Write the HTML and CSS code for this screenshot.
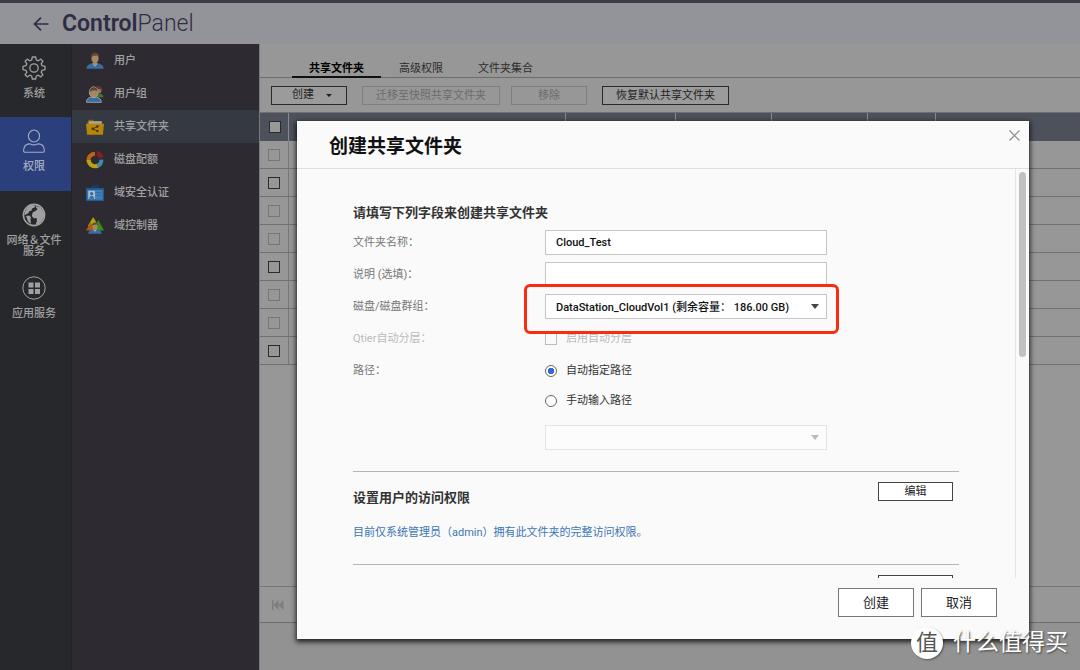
FILE: index.html
```html
<!DOCTYPE html>
<html lang="zh-CN">
<head>
<meta charset="utf-8">
<title>ControlPanel</title>
<link rel="stylesheet" href="styles.css">
</head>
<body>
<div class="app">
  <header class="topbar">
    <button class="back" type="button" aria-label="返回">
      <svg width="16" height="14" viewBox="0 0 16 14" fill="none" stroke="currentColor" stroke-width="1.7"><path d="M15.5 7H1.5M8 .7 1.5 7 8 13.3"/></svg>
    </button>
    <h1 class="brand"><b>Control</b>Panel</h1>
  </header>
  <div class="workspace">
    <nav class="rail" aria-label="分类">
      <a class="rail-item" href="#system">
        <svg width="24" height="24" viewBox="0 0 24 24" fill="none" stroke="currentColor" stroke-width="1.3" stroke-linejoin="round"><path d="M10.3 1h3.4l.6 3 1.9.8 2.6-1.7 2.1 2.1-1.7 2.6.8 1.9 3 .6v3.4l-3 .6-.8 1.9 1.7 2.6-2.1 2.1-2.6-1.7-1.9.8-.6 3h-3.4l-.6-3-1.9-.8-2.6 1.7-2.1-2.1 1.7-2.6-.8-1.9-3-.6v-3.4l3-.6.8-1.9-1.7-2.6 2.1-2.1 2.6 1.7 1.9-.8z"/><circle cx="12" cy="12" r="4.2"/></svg>
        <span>系统</span>
      </a>
      <a class="rail-item is-active" href="#privilege" aria-current="page">
        <svg width="24" height="24" viewBox="0 0 24 24" fill="none" stroke="currentColor" stroke-width="1.1" stroke-linejoin="round"><ellipse cx="12" cy="7" rx="5.6" ry="6"/><path d="M3.5 23.3c-1.4 0-2-.7-1.9-2 .2-3.6 2.300-6 5.400-6.400 1.500-.2 2.500 1 5 1s3.500-1.200 5-1c3.100.4 5.200 2.800 5.400 6.400.1 1.300-.5 2-1.900 2z"/></svg>
        <span>权限</span>
      </a>
      <a class="rail-item" href="#network">
        <svg width="24" height="24" viewBox="0 0 24 24"><circle cx="12" cy="12" r="10.600" fill="none" stroke="currentColor" stroke-width="1.600"/><path fill="currentColor" d="M3 8.500 5.500 4l4-2 4 .5-1 2-2.500 1-.5 2-2.500 1-.5 1.500L4 11.500l-1.500 1zM4 13l3-.5 2 1.500-.5 2.500L9 21l-3-2.500zM14 3l4.500 1.600L21 8l1.500 4-2 5-3.500 4-3.500.5 1.500-3.500-.5-3-2.700.2-2-2.200.8-3.500 3.200-1.700 1.700-1.600-1.500-1.700z"/></svg>
        <span>网络＆文件<br>服务</span>
      </a>
      <a class="rail-item" href="#applications">
        <svg width="24" height="24" viewBox="0 0 24 24"><circle cx="12" cy="12" r="11.200" fill="none" stroke="currentColor"/><path fill="currentColor" d="M6.500 6.500h5v5h-5zM13 6.500h5v5h-5zM6.500 13h5v5h-5zM13 13h5v5h-5z"/></svg>
        <span>应用服务</span>
      </a>
    </nav>
    <nav class="submenu" aria-label="权限">
      <a class="sub-item" href="#users">
        <svg width="18" height="18" viewBox="0 0 20 20"><path fill="#3a6c9f" d="M.5 18.500c.3-4 2.500-5 7-6h5c4.500 1 6.700 2 7 6z"/><path fill="#a4b5c6" d="m7 12.500 3 4 3-4z"/><path fill="#a68761" d="M8 9h4v4l-2 2-2-2z"/><ellipse cx="10" cy="7" rx="4" ry="5" fill="#a68761"/><path fill="#5c4636" d="M5.700 7C5.200 2.500 7.200.5 10 .5s4.800 2 4.300 6.500c-.7-2-1.300-3-2-3.300-1.700.8-3.500.6-4.500.5-.8.800-1.300 1.600-2.100 2.800z"/></svg>
        <span>用户</span>
      </a>
      <a class="sub-item" href="#groups">
        <svg width="18" height="18" viewBox="0 0 20 20"><ellipse cx="14" cy="5.500" rx="3.300" ry="4" fill="#9a7351"/><path fill="#5b3a30" d="M10.500 5c0-3 1.500-4 3.500-4s3.600 1.500 3.300 4.500C16 4.500 14.500 4 10.500 5z"/><path fill="#4b7723" d="M11 13c.5-3 2-3.300 4-3.300 2.500.3 4.200 1.500 4.500 4.300z"/><path fill="#3a6c9f" stroke="#aaa" stroke-width=".9" d="M.5 19.300c.2-4 2-5 5.300-6h5.700c3.300 1 5.300 2 5.500 6z"/><ellipse cx="8.500" cy="8" rx="4.800" ry="6" fill="#a68761" stroke="#aaa" stroke-width=".9"/><path fill="#5c4636" d="M4.200 8c-.2-3.500 1.500-5.500 4.300-5.500s4.500 2 4.300 5.500c-.7-1.500-1-2-1.800-2.300-1.500.5-3.200.5-4.500.3z"/></svg>
        <span>用户组</span>
      </a>
      <a class="sub-item is-active" href="#shared" aria-current="page">
        <svg width="18" height="18" viewBox="0 0 20 20"><path fill="#8c5e00" d="M1.500 5 3 2h5l1 2h9v5h-16z"/><path fill="#aaa394" d="M3 3.500h14.500V8H3z"/><path fill="#b48708" d="M0 6.500h20l-1.200 12H1.200z"/><path fill="none" stroke="#46310a" stroke-width="1" d="m12.500 9.500-5 2.500 5 2.500"/><g fill="#46310a"><circle cx="12.700" cy="9.500" r="1.400"/><circle cx="7.500" cy="12" r="1.400"/><circle cx="12.700" cy="14.500" r="1.400"/></g></svg>
        <span>共享文件夹</span>
      </a>
      <a class="sub-item" href="#quota">
        <svg width="18" height="18" viewBox="0 0 20 20" fill="none" stroke-width="4.500"><path stroke="#bd6610" d="M3 11.500A7 7 0 0 1 10 3"/><path stroke="#b9a313" d="M3 10a7 7 0 0 0 10 6.300"/><path stroke="#3d8cb0" d="M12.500 16.500A7 7 0 0 0 17 9.500"/><path fill="#8c1f20" d="M12 0c4 .5 6.500 3 7.500 6.500L14.700 8c-.4-1.300-1.300-2-2.700-2.300z"/></svg>
        <span>磁盘配额</span>
      </a>
      <a class="sub-item" href="#security">
        <svg width="18" height="18" viewBox="0 0 20 20"><path fill="#173a66" d="m6 0 3 2 1-2 1 2 3-2v6H6z"/><path fill="#24588f" d="M0 4.500h20V19H0z"/><path fill="#3f7fbb" d="M1.500 6.500h17v11h-17z"/><path fill="#a9bfca" d="M2.500 7.500h7.500v9H2.500z"/><circle cx="6.300" cy="10.700" r="1.900" fill="#3a6c9f"/><path fill="#3a6c9f" d="M3.500 16.500c.3-2.500 1.300-3.500 2.800-3.500s2.500 1 2.800 3.500z"/><path stroke="#2d679e" d="M11.500 9.500h5.500M11.500 12.500h5.500"/></svg>
        <span>域安全认证</span>
      </a>
      <a class="sub-item" href="#controller">
        <svg width="18" height="18" viewBox="0 0 20 20"><path fill="#b5a010" d="m8 0 6 10H2z"/><path fill="#ad5c0e" d="m5 6 5.500 9H0z"/><path fill="#3d8d12" d="m13.500 3 6.500 12H10z"/><path fill="#3a6c9f" d="M2.500 18.500c.3-3 2-4 5.500-4.700h4c3.500.7 5.200 1.700 5.500 4.700z"/><path fill="#a6aeb8" d="m8 13.500 2 3.200 2-3.200z"/><ellipse cx="10" cy="10.500" rx="3" ry="3.700" fill="#a68761"/><path fill="#5c4636" d="M6.700 10C6.500 7.300 8 6 10 6s3.500 1.300 3.300 4c-.8-1.300-1.500-1.700-3.300-1.500-1.500.1-2.600.3-3.300 1.500z"/></svg>
        <span>域控制器</span>
      </a>
    </nav>
    <main class="main">
      <nav class="tabs" aria-label="共享文件夹">
        <a class="tab is-active" href="#tab-shared">共享文件夹</a>
        <a class="tab" href="#tab-advanced">高级权限</a>
        <a class="tab" href="#tab-aggregation">文件夹集合</a>
      </nav>
      <div class="toolbar">
        <button class="tool has-menu" type="button">创建<i class="caret"></i></button>
        <button class="tool tool-migrate" type="button" disabled>迁移至快照共享文件夹</button>
        <button class="tool tool-remove" type="button" disabled>移除</button>
        <button class="tool tool-restore" type="button">恢复默认共享文件夹</button>
      </div>
      <div class="table-area">
        <table class="folders">
          <colgroup><col class="col-check"><col class="col-name"><col class="col-size"><col class="col-mid"><col class="col-mid"><col class="col-small"><col></colgroup>
          <thead><tr><th><input class="box" type="checkbox" aria-label="全选"></th><th></th><th></th><th></th><th></th><th></th><th></th></tr></thead>
          <tbody>
            <tr><td><input class="box" type="checkbox" aria-label="第 1 行" disabled></td><td colspan="6"></td></tr>
            <tr><td><input class="box" type="checkbox" aria-label="第 2 行"></td><td colspan="6"></td></tr>
            <tr><td><input class="box" type="checkbox" aria-label="第 3 行" disabled></td><td colspan="6"></td></tr>
            <tr><td><input class="box" type="checkbox" aria-label="第 4 行" disabled></td><td colspan="6"></td></tr>
            <tr><td><input class="box" type="checkbox" aria-label="第 5 行"></td><td colspan="6"></td></tr>
            <tr><td><input class="box" type="checkbox" aria-label="第 6 行" disabled></td><td colspan="6"></td></tr>
            <tr><td><input class="box" type="checkbox" aria-label="第 7 行" disabled></td><td colspan="6"></td></tr>
            <tr><td><input class="box" type="checkbox" aria-label="第 8 行"></td><td colspan="6"></td></tr>
          </tbody>
        </table>
      </div>
      <div class="pager">
        <button class="page-btn" type="button" aria-label="首页" disabled><svg width="12" height="10" viewBox="0 0 12 10" fill="currentColor"><path d="M0 0h1.500v10H0zM6.500 0v10L1.500 5zM11.500 0v10l-5-5z"/></svg></button>
      </div>
      <div class="main-foot"></div>
    </main>
  </div>

  <section class="dialog" role="dialog" aria-labelledby="dialog-title">
    <header class="dialog-head">
      <h2 id="dialog-title">创建共享文件夹</h2>
      <button class="close" type="button" aria-label="关闭"><svg width="11" height="11" viewBox="0 0 11 11" stroke="currentColor" stroke-width="1.200"><path d="m.5.5 10 10M10.500.5l-10 10"/></svg></button>
    </header>
    <div class="dialog-body">
      <form class="form">
        <h3>请填写下列字段来创建共享文件夹</h3>
        <div class="row"><label for="name">文件夹名称：</label><input class="field" id="name" type="text" value="Cloud_Test"></div>
        <div class="row"><label for="desc">说明 (选填)：</label><input class="field" id="desc" type="text"></div>
        <div class="row">
          <label for="volume">磁盘/磁盘群组：</label>
          <div class="pick marked"><select class="field" id="volume"><option>DataStation_CloudVol1 (剩余容量： 186.00 GB)</option></select><i class="caret"></i></div>
        </div>
        <div class="row is-off"><span>Qtier自动分层：</span><label class="choice"><input class="box" type="checkbox" disabled>启用自动分层</label></div>
        <div class="row" role="radiogroup" aria-labelledby="path-label">
          <span id="path-label">路径：</span>
          <div class="paths">
            <label class="choice"><input class="radio" type="radio" name="path" checked>自动指定路径</label>
            <label class="choice"><input class="radio" type="radio" name="path">手动输入路径</label>
            <div class="pick is-off"><select class="field" aria-label="路径" disabled><option></option></select><i class="caret"></i></div>
          </div>
        </div>
        <div class="section">
          <div class="section-head"><h3>设置用户的访问权限</h3><button class="edit" type="button">编辑</button></div>
          <p class="note">目前仅系统管理员（admin）拥有此文件夹的完整访问权限。</p>
        </div>
        <div class="section">
          <div class="section-head"><span></span><button class="edit" type="button" aria-label="编辑"></button></div>
        </div>
      </form>
      <div class="scrollbar"><div class="thumb"></div></div>
    </div>
    <footer class="dialog-foot">
      <button class="action" type="button">创建</button>
      <button class="action" type="button">取消</button>
    </footer>
  </section>

  <div class="watermark"><span class="seal">值</span><span>什么值得买</span></div>
</div>
</body>
</html>
```

FILE: styles.css
```css
* { box-sizing: border-box; }

body {
  margin: 0;
  font: 11px/16px Roboto, "Noto Sans CJK SC", sans-serif;
  color: #333;
}

h1, h2, h3, p { margin: 0; }
a { color: inherit; text-decoration: none; }
button, input, select { font: inherit; margin: 0; }
button { padding: 0; }

.app {
  position: relative;
  display: flex;
  flex-direction: column;
  min-height: 100vh;
  overflow: hidden;
}

/* Top bar */
.topbar {
  display: flex;
  align-items: center;
  gap: 13px;
  height: 44px;
  padding-left: 33px;
  background: #93949a;
  border-top: 3px solid #3d3c49;
  color: #2f2d44;
}
.back { display: flex; border: 0; background: none; color: inherit; }
.brand { font-size: 23px; line-height: 32px; font-weight: 300; }
.brand b { font-weight: 600; }

.workspace { flex: 1; display: flex; }

/* Side navigation */
.rail {
  flex: 0 0 72px;
  background: #27282b;
  border-right: 1px solid #232427;
  color: #a0a0a0;
}
.rail-item {
  display: flex;
  flex-direction: column;
  align-items: center;
  gap: 8px;
  min-height: 73px;
  padding: 12px 3px 0 0;
  line-height: 11px;
  font-weight: 500;
  text-align: center;
}
.rail-item.is-active { background: #2b3f7c; color: #a4adc4; min-height: 74px; }

.submenu {
  flex: 0 0 187px;
  background: #2d2b31;
  color: #a0a0a0;
  font-weight: 500;
}
.sub-item {
  display: flex;
  align-items: center;
  gap: 10px;
  height: 33px;
  padding: 1px 0 0 14px;
}
.sub-item.is-active { background: #353a42; }

/* Folder list */
.main {
  flex: 1;
  min-width: 0;
  display: flex;
  flex-direction: column;
  background: #979797;
  border-left: 1px solid #7a7a7a;
}
.tabs {
  display: flex;
  align-items: flex-end;
  gap: 1px;
  height: 34px;
  padding-left: 32px;
  border-bottom: 1px solid #6c6c6c;
}
.tab {
  height: 17px;
  padding: 0 17px;
  margin-bottom: -1px;
  color: #2c2c2c;
}
.tab.is-active { border-bottom: 2px solid #111; color: #000; font-weight: 700; }

.toolbar {
  display: flex;
  align-items: center;
  height: 35px;
  padding-left: 11px;
  border-bottom: 1px solid #707070;
}
.tool {
  min-width: 76px;
  height: 19px;
  border: 1px solid #2a2a2a;
  background: #9b9b9b;
  color: #1f1f1f;
  line-height: 18px;
}
.tool:disabled { border-color: #7f7f7f; color: #6c6c6c; background: #979797; }
.tool.has-menu { display: flex; align-items: center; justify-content: center; gap: 12px; padding-left: 6px; }
.tool-migrate { margin-left: 15px; padding: 0 13px; }
.tool-remove { margin-left: 11px; }
.tool-restore { margin-left: 15px; padding: 0 13px; }
.caret {
  border: 4px solid transparent;
  border-top: 5px solid currentColor;
  border-bottom: 0;
}
.tool .caret { border-width: 3px 3px 0; }

.table-area { flex: 1; }
.folders { width: 100%; table-layout: fixed; border-collapse: separate; border-spacing: 0; }
.folders th, .folders td { height: 28px; padding: 0; line-height: 0; text-align: left; }
.folders th { background: #4d515b; border-right: 1px solid #898a8d; }
.folders th:last-child { border-right: 0; }
.folders td { border-bottom: 1px solid #707070; }
.folders td:first-child { border-right: 1px solid #777; }
.folders .box { margin-left: 8px; }
.folders th .box { margin-left: 9px; background: #999; }
.col-check { width: 29px; }
.col-name { width: 277px; }
.col-size { width: 110px; }
.col-mid { width: 96px; }
.col-small { width: 68px; }

.box {
  appearance: none;
  width: 12px;
  height: 12px;
  border: 1px solid #2b2b2b;
  background: transparent;
}
.box:disabled { border-color: #777; }

.pager {
  display: flex;
  align-items: center;
  height: 36px;
  padding-left: 12px;
  border-top: 1px solid #757575;
}
.page-btn { display: flex; border: 0; background: none; color: #7e7e7e; }
.main-foot { height: 48px; border-top: 1px solid #6c6c6c; background: #929292; }

/* Dialog */
.dialog {
  position: absolute;
  top: 121px;
  right: 51px;
  bottom: 31px;
  left: 297px;
  display: flex;
  flex-direction: column;
  background: #fafafa;
  box-shadow: 0 2px 5px 1px rgba(0, 0, 0, 0.8);
}
.dialog-head {
  display: flex;
  justify-content: space-between;
  align-items: flex-start;
  height: 48px;
  padding: 9px 9px 0 32px;
  border-bottom: 1px solid #dedede;
}
.dialog-head h2 { font-size: 19px; line-height: 33px; font-weight: 700; color: #111; }
.close { display: flex; border: 0; background: none; color: #8b8b8b; }

.dialog-body { flex: 1; min-height: 0; display: flex; overflow: hidden; }
.form {
  flex: 1;
  display: flex;
  flex-direction: column;
  gap: 7px;
  padding: 34px 56px 0 56px;
  color: #777;
}
.form h3 { font-size: 13px; line-height: 20px; font-weight: 700; color: #333; }
.row { display: grid; grid-template-columns: 192px minmax(0, 282px); line-height: 25px; }
.field {
  width: 100%;
  height: 25px;
  padding: 0 10px;
  border: 1px solid #c6c6c6;
  border-radius: 0;
  background: #fff;
  color: #111;
  font-weight: 500;
  appearance: none;
}
.pick { position: relative; display: flex; }
.pick .field { opacity: 1; }
.pick .caret { position: absolute; top: 10px; right: 8px; color: #444; }
.pick.is-off .field { border-color: #e4e4e4; background: #fcfcfc; }
.pick.is-off .caret { color: #bbb; }
.marked::after {
  content: "";
  position: absolute;
  inset: -10px -12px -15px -21px;
  border: 3px solid #fb2c0d;
  border-radius: 6px;
  pointer-events: none;
}
.choice { display: flex; align-items: center; gap: 9px; height: 25px; color: #333; }
.is-off, .is-off .choice { color: #bbb; }
.choice .box { border-color: #bbb; }
.radio {
  appearance: none;
  width: 12px;
  height: 12px;
  border: 1px solid #666;
  border-radius: 50%;
  background: #fff;
}
.radio:checked { background: radial-gradient(circle, #3567dc 0 3px, #fff 3px); }
.paths { display: grid; gap: 5px; }
.paths .pick { margin-top: 7px; }

.section { border-top: 1px solid #b5b5b5; }
.row + .section { margin-top: 14px; }
.section-head { display: flex; justify-content: space-between; align-items: flex-start; padding: 10px 6px 0 0; }
.section-head h3 { padding-top: 6px; }
.edit {
  width: 75px;
  height: 19px;
  border: 1px solid #444;
  background: #fff;
  color: #222;
  line-height: 17px;
}
.note { padding: 17px 0 16px; color: #3b76b5; }

.scrollbar { flex: 0 0 14px; padding: 3px; border-left: 1px solid #e5e5e5; }
.thumb { width: 7px; height: 46%; border-radius: 4px; background: #c1c1c1; }

.dialog-foot { display: flex; justify-content: flex-end; gap: 7px; padding: 10px 32px 22px; }
.action {
  width: 76px;
  height: 29px;
  border: 1px solid #777;
  background: #fff;
  color: #222;
  font-size: 13px;
}

/* Site mark */
.watermark {
  position: absolute;
  right: 12px;
  bottom: 11px;
  display: flex;
  align-items: center;
  gap: 10px;
  color: #fff;
  font-size: 23px;
  line-height: 32px;
  text-shadow: 1px 1px 2px #444;
}
.seal {
  width: 32px;
  border-radius: 50%;
  background: #fff;
  color: #555;
  font-size: 22px;
  text-align: center;
  text-shadow: none;
  box-shadow: 1px 1px 2px rgba(0, 0, 0, 0.4);
}
```
